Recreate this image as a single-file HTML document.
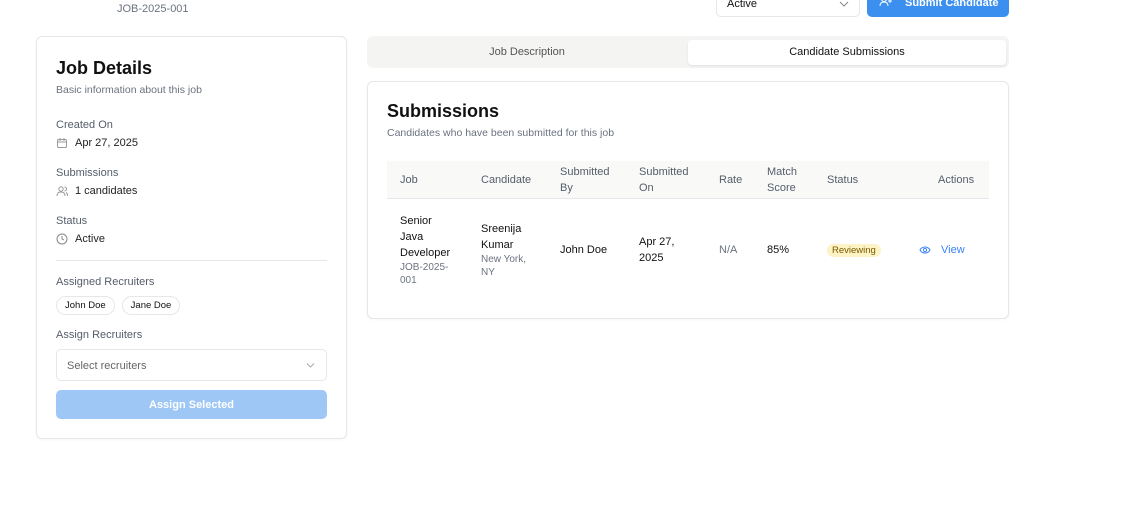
<!DOCTYPE html>
<html><head><meta charset="utf-8"><style>
*{box-sizing:border-box;margin:0;padding:0}
body{width:1131px;height:505px;background:#fff;font-family:"Liberation Sans",sans-serif;position:relative;overflow:hidden;color:#111}
.a{position:absolute}
.muted{color:#6b7280}
.lbl{font-size:11px;color:#555d6b}
.val{font-size:11px;color:#222;display:flex;align-items:center;gap:7px}
.card{border:1px solid #e5e7eb;border-radius:6px;background:#fff;box-shadow:0 1px 2px rgba(0,0,0,.04)}
.chip{border:1px solid #e5e7eb;border-radius:10px;font-size:9.5px;padding:3px 8px;display:inline-block;color:#111}
.th{font-size:11px;color:#555d6b;line-height:16px}
.td{font-size:11px;line-height:16px}
</style></head><body>
<div class="a muted" style="left:117px;top:3px;font-size:11px">JOB-2025-001</div>
<div class="a" style="left:716px;top:-12px;width:144px;height:29px;border:1px solid #e5e7eb;border-radius:5px;font-size:11px;padding:9px 10px">Active<svg class="a" style="right:10px;top:12px" width="10" height="6"><path d="M1 1l4 4 4-4" stroke="#888" fill="none"/></svg></div>
<div class="a" style="left:867px;top:-12px;width:142px;height:29px;background:#3b8fee;border-radius:5px;color:#fff;font-size:11px;font-weight:bold;padding:9px 0 0 38px">Submit Candidate</div>
<svg class="a" style="left:879px;top:-4px" width="14" height="12"><circle cx="5" cy="3" r="2.5" fill="none" stroke="#fff"/><path d="M1 10c0-3 2-4 4-4s4 1 4 4M11 3v4M9 5h4" fill="none" stroke="#fff"/></svg>

<div class="a card" style="left:36px;top:36px;width:311px;height:403px"></div>
<div class="a" style="left:56px;top:58px;font-size:18px;font-weight:bold">Job Details</div>
<div class="a muted" style="left:56px;top:84px;font-size:10.5px">Basic information about this job</div>
<div class="a lbl" style="left:56px;top:119px">Created On</div>
<div class="a val" style="left:56px;top:137px"><svg width="12" height="12"><rect x="1.5" y="2.5" width="9" height="8" rx="1" fill="none" stroke="#999"/><path d="M1.5 5h9M4 1v3M8 1v3" stroke="#999"/></svg>Apr 27, 2025</div>
<div class="a lbl" style="left:56px;top:167px">Submissions</div>
<div class="a val" style="left:56px;top:185px"><svg width="12" height="12"><circle cx="5" cy="4" r="2.2" fill="none" stroke="#999"/><path d="M1 11c0-3 2-4 4-4s4 1 4 4M8.5 2a2 2 0 010 4M10 7.5c1 .5 1.5 2 1.5 3.5" fill="none" stroke="#999"/></svg>1 candidates</div>
<div class="a lbl" style="left:56px;top:215px">Status</div>
<div class="a val" style="left:56px;top:233px"><svg width="12" height="12"><circle cx="6" cy="6" r="5" fill="none" stroke="#888"/><path d="M6 3v3l2 1" fill="none" stroke="#888"/></svg>Active</div>
<div class="a" style="left:56px;top:260px;width:271px;height:1px;background:#e5e7eb"></div>
<div class="a lbl" style="left:56px;top:276px">Assigned Recruiters</div>
<div class="a" style="left:56px;top:296px;display:flex;gap:7px"><span class="chip">John Doe</span><span class="chip">Jane Doe</span></div>
<div class="a lbl" style="left:56px;top:329px">Assign Recruiters</div>
<div class="a" style="left:56px;top:349px;width:271px;height:32px;border:1px solid #e5e7eb;border-radius:5px;font-size:11px;color:#666;padding:10px 10px">Select recruiters<svg class="a" style="right:11px;top:13px" width="9" height="5"><path d="M1 0.5l3.5 3.5 3.5-3.5" stroke="#aaa" fill="none"/></svg></div>
<div class="a" style="left:56px;top:390px;width:271px;height:29px;background:#9ec7f5;border-radius:5px;color:#fff;font-size:11px;font-weight:bold;text-align:center;line-height:31px">Assign Selected</div>

<div class="a" style="left:367px;top:36px;width:642px;height:32px;background:#f4f4f3;border-radius:6px"></div>
<div class="a muted" style="left:367px;top:46px;width:320px;text-align:center;font-size:11px;color:#555">Job Description</div>
<div class="a" style="left:688px;top:40px;width:318px;height:25px;background:#fff;border-radius:4px;box-shadow:0 1px 2px rgba(0,0,0,.08);font-size:11px;text-align:center;line-height:25px">Candidate Submissions</div>

<div class="a card" style="left:367px;top:81px;width:642px;height:238px"></div>
<div class="a" style="left:387px;top:101px;font-size:18px;font-weight:bold">Submissions</div>
<div class="a muted" style="left:387px;top:127px;font-size:10.5px">Candidates who have been submitted for this job</div>
<div class="a" style="left:387px;top:161px;width:602px;height:38px;background:#f9f9f7;border-bottom:1px solid #e5e7eb"></div>
<div class="a th" style="left:400px;top:172px">Job</div>
<div class="a th" style="left:481px;top:172px">Candidate</div>
<div class="a th" style="left:560px;top:164px">Submitted<br>By</div>
<div class="a th" style="left:639px;top:164px">Submitted<br>On</div>
<div class="a th" style="left:719px;top:172px">Rate</div>
<div class="a th" style="left:767px;top:164px">Match<br>Score</div>
<div class="a th" style="left:827px;top:172px">Status</div>
<div class="a th" style="left:938px;top:172px">Actions</div>
<div class="a td" style="left:400px;top:213px">Senior<br>Java<br>Developer</div>
<div class="a muted" style="left:400px;top:261px;font-size:10px;line-height:13px">JOB-2025-<br>001</div>
<div class="a td" style="left:481px;top:221px">Sreenija<br>Kumar</div>
<div class="a muted" style="left:481px;top:253px;font-size:10px;line-height:13px">New York,<br>NY</div>
<div class="a td" style="left:560px;top:242px">John Doe</div>
<div class="a td" style="left:639px;top:234px">Apr 27,<br>2025</div>
<div class="a td muted" style="left:719px;top:242px">N/A</div>
<div class="a td" style="left:767px;top:242px">85%</div>
<div class="a" style="left:827px;top:244px;background:#fdf3c4;color:#7a5a00;font-size:9.5px;border-radius:8px;padding:1px 5px">Reviewing</div>
<div class="a td" style="left:919px;top:242px;color:#3b82f6;display:flex;align-items:center;gap:10px"><svg width="12" height="10"><path d="M1 5c2-4 8-4 10 0-2 4-8 4-10 0z" fill="none" stroke="#3b82f6"/><circle cx="6" cy="5" r="1.6" fill="none" stroke="#3b82f6"/></svg>View</div>
</body></html>
